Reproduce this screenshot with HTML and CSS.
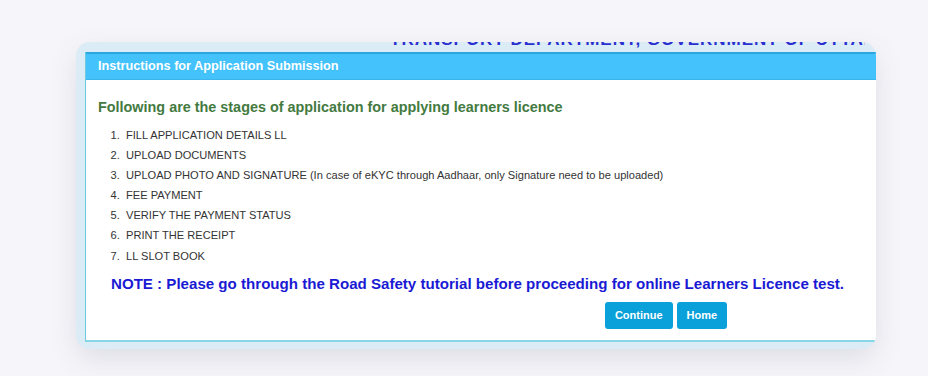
FILE: index.html
```html
<!DOCTYPE html>
<html lang="en">
<head>
    <meta charset="UTF-8">
    <meta name="viewport" content="width=device-width, initial-scale=1.0">
    <title>Learners Licence - Instructions</title>
    <link rel="stylesheet" href="styles.css">
</head>
<body>
    <div class="card">
        <div class="dept-title">TRANSPORT DEPARTMENT, GOVERNMENT OF UTTAR PRADESH</div>
        <div class="panel">
            <div class="panel-heading">Instructions for Application Submission</div>
            <div class="panel-body">
                <h3 class="stages-title">Following are the stages of application for applying learners licence</h3>
                <ol class="stages">
                    <li>FILL APPLICATION DETAILS LL</li>
                    <li>UPLOAD DOCUMENTS</li>
                    <li>UPLOAD PHOTO AND SIGNATURE (In case of eKYC through Aadhaar, only Signature need to be uploaded)</li>
                    <li>FEE PAYMENT</li>
                    <li>VERIFY THE PAYMENT STATUS</li>
                    <li>PRINT THE RECEIPT</li>
                    <li>LL SLOT BOOK</li>
                </ol>
                <p class="note">NOTE : Please go through the Road Safety tutorial before proceeding for online Learners Licence test.</p>
                <div class="actions">
                    <button class="btn">Continue</button>
                    <button class="btn">Home</button>
                </div>
            </div>
        </div>
    </div>
</body>
</html>
```

FILE: styles.css
```css
* {
    margin: 0;
    padding: 0;
    box-sizing: border-box;
}
body {
    background-color: #f6f6fa;
    font-family: "Liberation Sans", Arial, sans-serif;
    height: 376px;
    overflow: hidden;
}
.card {
    width: 800px;
    margin: 42px 0 0 76px;
    padding: 0 0 7px 9px;
    background-color: #dbecf6;
    border-radius: 14px;
    overflow: hidden;
    box-shadow: 0 10px 28px rgba(60, 60, 90, 0.13);
}
.dept-title {
    width: 780px;
    height: 20px;
    margin-top: -12px;
    margin-bottom: 2px;
    padding-left: 305px;
    color: #2a2fd0;
    font-size: 17px;
    font-weight: bold;
    line-height: 20px;
    letter-spacing: 1px;
    white-space: nowrap;
    overflow: hidden;
}
.panel {
    width: 1162px;
    border: 1px solid #6cc9e0;
    border-top: 0;
    border-bottom: 2px solid #86d6e8;
    background-color: #fff;
}
.panel-heading {
    height: 28px;
    padding-left: 12px;
    background-color: #43c2fb;
    border-top: 2px solid #2ca6de;
    border-bottom: 1px solid #3bb4ea;
    color: #fff;
    font-size: 12.7px;
    font-weight: bold;
    line-height: 25px;
}
.panel-body {
    padding: 17px 12px 11px;
}
.stages-title {
    color: #437a3f;
    font-size: 14.4px;
    font-weight: bold;
    line-height: 20px;
    margin-bottom: 8px;
}
.stages {
    padding-left: 28px;
    color: #333;
    font-size: 11.1px;
    line-height: 20.1px;
}
.stages li::marker {
    content: counter(list-item) ".\00a0\00a0";
}
.note {
    margin-top: 8px;
    padding-left: 13px;
    color: #1a1ad4;
    font-size: 15.1px;
    font-weight: bold;
    line-height: 20px;
}
.actions {
    margin-top: 8px;
    display: flex;
    justify-content: center;
    gap: 4px;
}
.btn {
    height: 27px;
    padding: 0 10px;
    background-color: #0aa0d9;
    border: 0;
    border-radius: 3px;
    color: #fff;
    font-family: "Liberation Sans", Arial, sans-serif;
    font-size: 11px;
    font-weight: bold;
}
```
